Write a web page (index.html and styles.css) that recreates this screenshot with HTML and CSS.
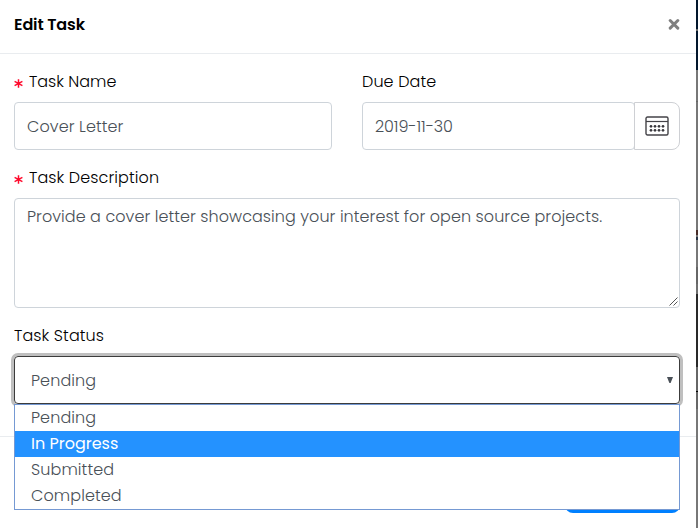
FILE: index.html
```html
<!DOCTYPE html>
<html lang="en">
<head>
<meta charset="utf-8">
<title>Edit Task</title>
<link rel="stylesheet" href="styles.css">
</head>
<body>
<div class="modal">
  <header class="header">
    <h1 class="title">Edit Task</h1>
    <svg class="close" width="12" height="12" viewBox="0 0 12 12"><path d="M2.2 2.5 9.8 10.1M9.8 2.5 2.2 10.1" fill="none" stroke="#808080" stroke-width="3" stroke-linecap="round"/></svg>
  </header>
  <main class="form">
    <div class="row">
      <div class="field">
        <div class="label"><svg class="required" width="9" height="9" viewBox="0 0 9 9"><path d="M4.5.3v8.4M.6 2.4l7.8 4.2M8.4 2.4.6 6.6"/></svg><span>Task Name</span></div>
        <div class="input"><span class="cover">Cover Letter</span></div>
      </div>
      <div class="field">
        <div class="label"><span class="wide">Due Date</span></div>
        <div class="date">
          <div class="input date-input"><span class="due">2019-11-30</span></div>
          <div class="calendar">
            <svg width="24" height="20" viewBox="0 0 24 20"><rect x="1" y="1" width="22" height="18" rx="1.5" fill="none" stroke="#444348" stroke-width="1.4"/><path d="M1 5.5h22" stroke="#444348" stroke-width="1.2"/><g fill="#38373c"><circle cx="6" cy="10.3" r="1.35"/><circle cx="10" cy="10.3" r="1.35"/><circle cx="14" cy="10.3" r="1.35"/><circle cx="18" cy="10.3" r="1.35"/><circle cx="6" cy="14.3" r="1.35"/><circle cx="10" cy="14.3" r="1.35"/><circle cx="14" cy="14.3" r="1.35"/><circle cx="18" cy="14.3" r="1.35"/></g></svg>
          </div>
        </div>
      </div>
    </div>
    <div class="label"><svg class="required" width="9" height="9" viewBox="0 0 9 9"><path d="M4.5.3v8.4M.6 2.4l7.8 4.2M8.4 2.4.6 6.6"/></svg><span class="wide">Task Description</span></div>
    <div class="textarea"><span class="body-text">Provide a cover letter showcasing your interest for open source projects.</span>
      <svg class="grip" width="9" height="9" viewBox="0 0 9 9"><path d="M.5 8.5l8-8M4.5 8.5l4-4" stroke="#555" stroke-width="1" fill="none"/></svg>
    </div>
    <div class="label"><span class="wide">Task Status</span></div>
    <div class="select"><span class="wide">Pending</span><svg class="arrow" width="6" height="6" viewBox="0 0 6 6"><path d="M0 0h6L3.6 6H2.4z" fill="#495057"/></svg>
      <div class="menu">
        <div class="option"><span class="wide">Pending</span></div>
        <div class="option active"><span>In Progress</span></div>
        <div class="option"><span class="wide">Submitted</span></div>
        <div class="option"><span class="wide">Completed</span></div>
      </div>
    </div>
  </main>
  <footer class="footer"><div class="save"></div></footer>
</div>
<div class="backdrop"></div>
</body>
</html>
```
FILE: styles.css
```css
* { box-sizing: border-box; }
body {
  margin: 0;
  width: 698px;
  height: 528px;
  overflow: hidden;
  display: flex;
  background: #fff;
  color: #000;
  font: 300 16px/24px Poppins, Inter, sans-serif;
}
span { white-space: nowrap; }
.modal { width: 696px; height: 528px; background: #fff; }
.header {
  height: 54px;
  padding: 0 16px 5px 14px;
  display: flex;
  align-items: center;
  justify-content: space-between;
  border-bottom: 1px solid #e9ecef;
}
.title {
  margin: 0;
  padding-top: 2px;
  font-size: 16px;
  font-weight: 600;
  letter-spacing: -0.12px;
}
.close { display: block; }
.form { height: 382px; padding: 16px 16px 0 14px; }
.row { display: grid; grid-template-columns: 318px 318px; gap: 30px; }
.label { height: 32px; display: flex; align-items: flex-start; }
.required {
  margin: 9px 6px 0 0;
  fill: none;
  stroke: #ff0a2d;
  stroke-width: 1.5;
}
.wide { letter-spacing: 0.1px; }
.cover { letter-spacing: 0.1px; }
.due { letter-spacing: -0.1px; }
.body-text { letter-spacing: 0.06px; }
.input {
  height: 48px;
  padding: 2px 12px 0;
  display: flex;
  align-items: center;
  border: 1px solid #ced4da;
  border-radius: 4px;
  color: #495057;
}
.date { display: flex; }
.date-input { width: 273px; }
.calendar {
  width: 46px;
  height: 48px;
  margin-left: -1px;
  display: flex;
  align-items: center;
  justify-content: center;
  border: 1px solid #ced0d4;
  border-radius: 0 8px 8px 0;
}
.row + .label { margin-top: 16px; }
.textarea {
  position: relative;
  height: 110px;
  margin-bottom: 16px;
  padding: 6px 12px;
  border: 1px solid #ced4da;
  border-radius: 4px;
  color: #495057;
}
.grip { position: absolute; right: 1px; bottom: 1px; }
.select {
  position: relative;
  height: 48px;
  padding: 2px 6px 0 16px;
  display: flex;
  align-items: center;
  justify-content: space-between;
  border: 1px solid #3c3c3c;
  border-radius: 4px;
  box-shadow: 0 0 0 3px #bfbfbf;
  color: #495057;
}
.arrow { margin-bottom: 2px; }
.menu {
  position: absolute;
  z-index: 2;
  top: 47px;
  left: -1px;
  width: 666px;
  height: 106px;
  border: 1px solid #7599d3;
  background: #fff;
}
.option { height: 26px; padding-left: 16px; line-height: 26px; }
.active { background: #2492ff; color: #fff; font-weight: 400; }
.footer {
  height: 92px;
  padding: 28px 16px 0;
  display: flex;
  justify-content: flex-end;
  border-top: 1px solid #e9ecef;
}
.save { width: 115px; height: 48px; border-radius: 8px; background: #0080ff; }
.backdrop {
  width: 2px;
  height: 528px;
  background: linear-gradient(#02162c 0 29px, #666 29px 31px, #02162c 31px 70px, #777 70px 101px, #666 101px 102px, #777 102px 230px, #482d28 230px 235px, #777 235px 237px, #283546 237px 240px, #777 240px 267px, #666 267px 284px, #707070 284px 294px, #292929 294px 367px, #666 367px 391px, #000 391px 392px, #666 392px 409px, #777 409px);
}
```
